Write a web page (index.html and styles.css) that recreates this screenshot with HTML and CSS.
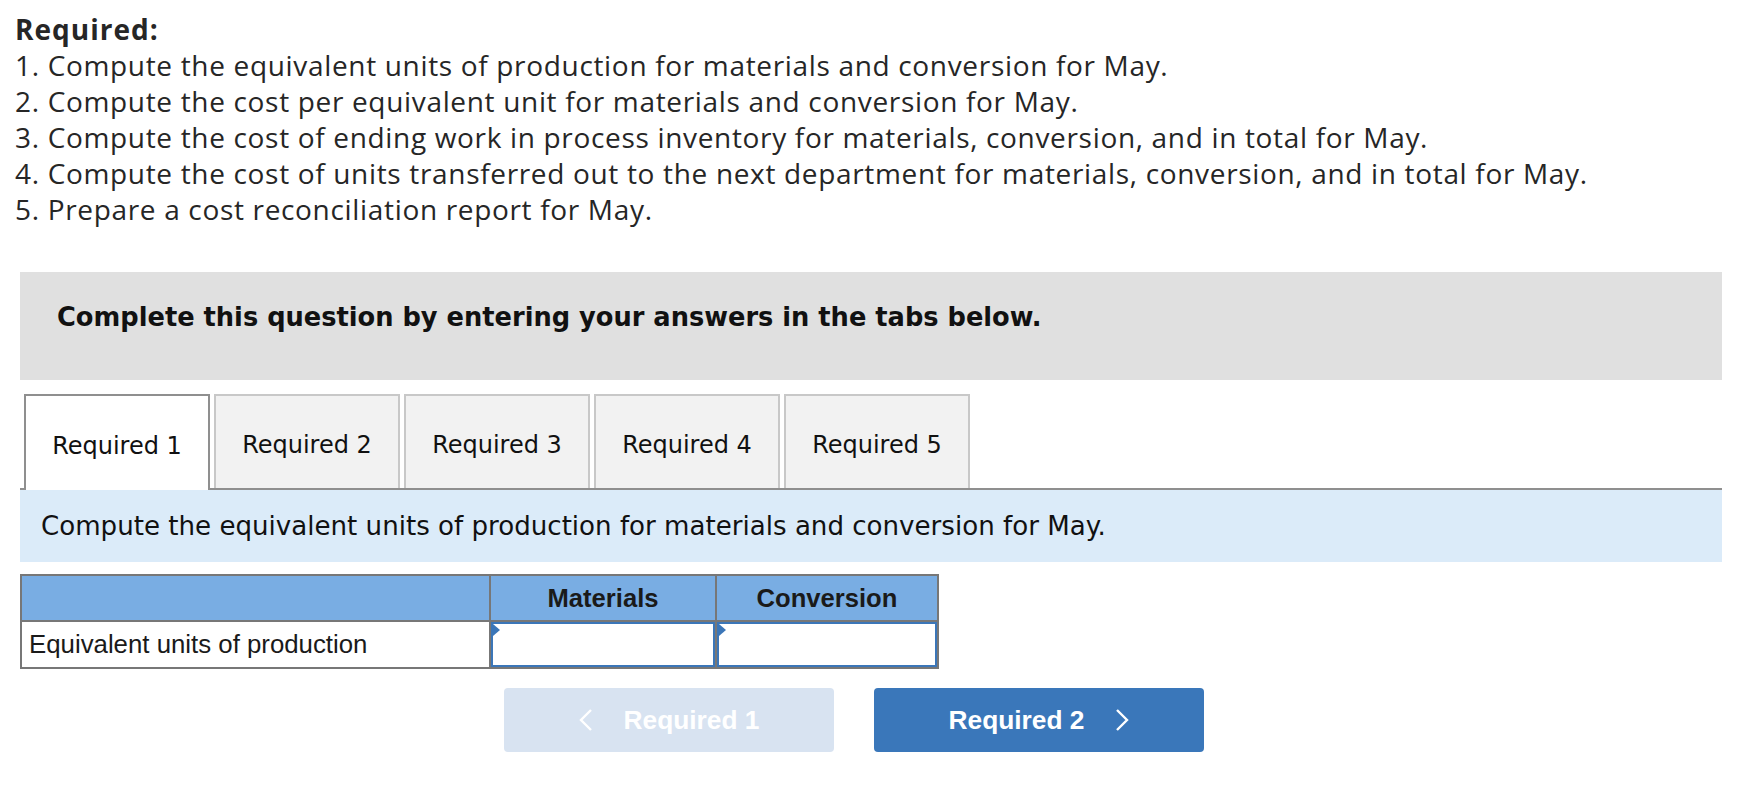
FILE: index.html
```html
<!DOCTYPE html>
<html lang="en">
<head>
    <meta charset="UTF-8">
    <title>Required 1</title>
    <link rel="stylesheet" href="styles.css">
</head>
<body>
    <div class="required">
        <h3>Required:</h3>
        <p>1. Compute the equivalent units of production for materials and conversion for May.</p>
        <p>2. Compute the cost per equivalent unit for materials and conversion for May.</p>
        <p>3. Compute the cost of ending work in process inventory for materials, conversion, and in total for May.</p>
        <p>4. Compute the cost of units transferred out to the next department for materials, conversion, and in total for May.</p>
        <p>5. Prepare a cost reconciliation report for May.</p>
    </div>

    <div class="question-box">Complete this question by entering your answers in the tabs below.</div>

    <div class="tabs">
        <a href="#" class="tab active">Required 1</a>
        <a href="#" class="tab">Required 2</a>
        <a href="#" class="tab">Required 3</a>
        <a href="#" class="tab">Required 4</a>
        <a href="#" class="tab">Required 5</a>
    </div>
    <div class="tab-desc">Compute the equivalent units of production for materials and conversion for May.</div>

    <table class="answer">
        <tr>
            <th class="label-col"></th>
            <th>Materials</th>
            <th>Conversion</th>
        </tr>
        <tr>
            <td class="label-col">Equivalent units of production</td>
            <td class="cell"><input type="text"></td>
            <td class="cell"><input type="text"></td>
        </tr>
    </table>

    <div class="nav">
        <button class="btn prev" disabled>
            <svg width="14" height="22" viewBox="0 0 14 22"><polyline points="12,1 2,11 12,21" fill="none" stroke="#fff" stroke-width="2.4"/></svg>
            <span>Required 1</span>
        </button>
        <button class="btn next">
            <span>Required 2</span>
            <svg width="14" height="22" viewBox="0 0 14 22"><polyline points="2,1 12,11 2,21" fill="none" stroke="#fff" stroke-width="2.4"/></svg>
        </button>
    </div>
</body>
</html>
```
FILE: styles.css
```css
body {
    margin: 0;
    padding: 0;
    background: #fff;
    color: #262626;
    font-family: "Open Sans", "Liberation Sans", sans-serif;
}
.required {
    padding: 11px 0 0 15px;
}
.required h3 {
    margin: 0;
    font-size: 28px;
    line-height: 36px;
    font-weight: bold;
    letter-spacing: 1px;
}
.required p {
    margin: 0;
    font-size: 28px;
    line-height: 36px;
    letter-spacing: 0.67px;
}
.question-box {
    margin: 45px 16px 0 20px;
    height: 108px;
    box-sizing: border-box;
    padding: 0 0 18px 37px;
    background-color: #e0e0e0;
    font-family: "DejaVu Sans", Verdana, sans-serif;
    font-weight: bold;
    font-size: 25.7px;
    line-height: 90px;
    color: #111;
}
.tabs {
    display: flex;
    margin: 14px 16px 0 20px;
    padding-left: 4px;
    border-bottom: 2px solid #8f8f8f;
    height: 94px;
}
.tab {
    width: 186px;
    margin-right: 4px;
    box-sizing: border-box;
    padding-top: 6px;
    border: 2px solid #c8c8c8;
    border-bottom: none;
    background-color: #f2f2f2;
    color: #111;
    text-decoration: none;
    font-family: "DejaVu Sans", Verdana, sans-serif;
    font-size: 24px;
    display: flex;
    align-items: center;
    justify-content: center;
}
.tab.active {
    background-color: #fff;
    border-color: #8f8f8f;
    height: 96px;
}
.tab-desc {
    margin: 0 16px 0 20px;
    height: 72px;
    background-color: #dbebf9;
    padding-left: 21px;
    font-family: "DejaVu Sans", Verdana, sans-serif;
    font-size: 26.1px;
    line-height: 72px;
    color: #111;
}
.answer {
    margin: 12px 0 0 20px;
    border-collapse: collapse;
    border: 2px solid #777;
    font-family: "Liberation Sans", Arial, sans-serif;
}
.answer th {
    background-color: #79ade3;
    height: 44px;
    border: 2px solid #777;
    font-size: 25.6px;
    color: #1a1a1a;
    padding: 0;
}
.answer td {
    height: 43px;
    border: 2px solid #777;
    font-size: 25.8px;
    color: #1a1a1a;
    padding: 0 0 0 7px;
}
.answer .label-col {
    width: 460px;
}
.answer th:nth-child(2) {
    width: 224px;
}
.answer th:nth-child(3) {
    width: 220px;
}
.answer td.cell {
    padding: 0;
    position: relative;
}
.answer td.cell input {
    display: block;
    width: 100%;
    height: 45px;
    box-sizing: border-box;
    border: 2px solid #3b76b8;
    margin: 0;
    outline: none;
}
.answer td.cell::before {
    content: "";
    position: absolute;
    left: 2px;
    top: 2px;
    border-left: 7px solid #3b76b8;
    border-top: 6px solid transparent;
    border-bottom: 6px solid transparent;
}
.nav {
    display: flex;
    gap: 40px;
    margin: 19px 0 0 504px;
}
.btn {
    width: 330px;
    height: 64px;
    border: none;
    border-radius: 4px;
    display: flex;
    align-items: center;
    justify-content: center;
    gap: 31px;
    color: #fff;
    font-family: "Liberation Sans", Arial, sans-serif;
    font-weight: bold;
    font-size: 26.3px;
    padding: 0;
}
.btn.prev {
    background-color: #d8e3f1;
}
.btn.next {
    background-color: #3a77ba;
}
```
